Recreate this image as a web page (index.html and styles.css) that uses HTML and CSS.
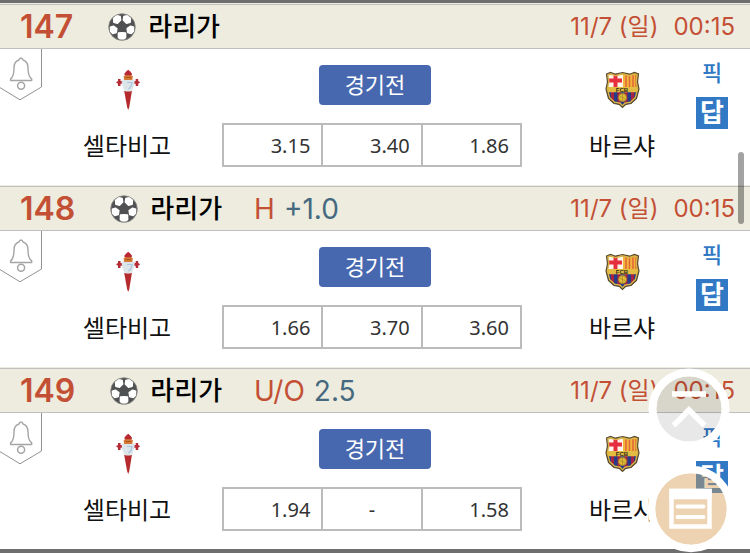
FILE: index.html
```html
<!DOCTYPE html>
<html lang="ko">
<head>
<meta charset="utf-8">
<meta name="viewport" content="width=device-width, initial-scale=1">
<title>라리가</title>
<link rel="stylesheet" href="styles.css">
</head>
<body>
<svg class="defs" aria-hidden="true">
  <symbol id="ball" viewBox="0 0 28 28">
    <circle cx="14" cy="14" r="13.3" fill="#505152"/>
    <g fill="#fff" stroke="#fff" stroke-width="1.400" stroke-linejoin="round">
      <path d="M5.500 5 8.800 2.600 12.200 3.500 12.700 7 9.500 10.300 5.800 9.300Z"/>
      <path d="M22.500 5 19.200 2.600 15.800 3.500 15.300 7 18.500 10.300 22.200 9.300Z"/>
      <path d="M2.300 14.200 5.400 13.200 8.900 15.600 8.300 19.500 4.800 20.600 2.600 18.500Z"/>
      <path d="M25.700 14.200 22.600 13.200 19.100 15.600 19.700 19.500 23.200 20.600 25.400 18.500Z"/>
      <path d="M10.400 20 14 19.700 17.600 20 17.700 24.500 16 26H12L10.300 24.500Z"/>
    </g>
    <circle cx="14" cy="14" r="13.3" fill="none" stroke="#8a8a86" stroke-width=".8"/>
  </symbol>
  <symbol id="tab" viewBox="0 0 42 52">
    <path d="M41.500 0V38L20 50.800-1 38" fill="none" stroke="#929292" stroke-width="1"/>
    <path d="M21 9C19.800 9 19.200 10 18.900 11 15.500 12 14 15 14 19 14 25 13 28 10.600 29.900V31.500H31.700V29.900C29 28 28 25 28 19 28 15 26.500 12 23.100 11 22.800 10 22.200 9 21 9Z" fill="none" stroke="#a5a5a5" stroke-width="1.400" stroke-linejoin="round"/>
    <circle cx="21.100" cy="36.800" r="3.500" fill="none" stroke="#a5a5a5" stroke-width="1.500"/>
  </symbol>
  <symbol id="celta" viewBox="0 0 48 48">
    <path d="M21.200 26H28.900L26.300 42 25.200 45 24.100 42Z" fill="#b52a2c"/>
    <path d="M13 17.300 15 15.900V14H17.500V16H20V18.800H17.500V21H15V18.800ZM37.200 17.300 35.200 15.900V14H32.700V16H30V18.800H32.700V21H35.200V18.800Z" fill="#b52a35"/>
    <path d="M18.500 14.500H32L31.200 19.500 29.500 24.500 27.500 26.500H22.700L20.800 24.500 19 19.500Z" fill="#dce5e7"/>
    <path d="M24 17.500H29L28 21.500 25.500 24" fill="none" stroke="#a9c5df" stroke-width="1.200"/>
    <path d="M20.500 11.500 23 9.500H27.300L30 11.500 29.200 15H21.200Z" fill="#d57a35"/>
    <path d="M22.500 12.500H28" stroke="#a95824" stroke-width="1"/>
    <path d="M21.300 8.700 23.200 6.400 25.200 4.700 27.200 6.400 29 8.700 28.600 10.200H21.800Z" fill="#b82934"/>
  </symbol>
  <symbol id="barca" viewBox="0 0 48 48">
    <clipPath id="shield"><path d="M8.500 9 12.500 7.500 17.500 9.200 24.500 7.500 31.500 9.200 36.500 7.500 40.500 9 39.500 17 41 24 38.500 33.500 33 38.500 27.500 39.500 24.500 42.500 21.500 39.500 16 38.500 10.500 33.500 8 24 9.500 17Z"/></clipPath>
    <g clip-path="url(#shield)">
      <path d="M7 6H25V23H7Z" fill="#fff5e8"/>
      <path d="M17.500 8V23M10 15.500H24" stroke="#e52e3e" stroke-width="4"/>
      <path d="M25 6H42V23H25Z" fill="#f3b63b"/>
      <path d="M28 9V23M31.500 9V23M35 9V23M38 9V23" stroke="#df653a" stroke-width="1.500"/>
      <path d="M7 27H42V43H7Z" fill="#263c87"/>
      <path d="M14.500 27V40M21 27V42M28 27V42M34.500 27V40" stroke="#a72346" stroke-width="3"/>
      <path d="M7 22H42V27.200H7Z" fill="#e2bd41"/>
      <circle cx="24.500" cy="32.500" r="4" fill="#e5bd35" stroke="#a6842c"/>
      <path d="M22 31.500 27 33.500M24.500 29V36" stroke="#a6842c" stroke-width=".7"/>
    </g>
    <path d="M9.800 10 12.500 8.900 17.500 10.500 24.500 8.900 31.500 10.500 36.500 8.900 39.200 10 38.400 17 39.700 24 37.500 32.700 32.500 37.300 27 38.300 24.500 41 22 38.300 16.500 37.300 11.500 32.700 9.300 24 10.600 17Z" fill="none" stroke="#d9b447" stroke-width="1.600"/>
    <path d="M8.500 9 12.500 7.500 17.500 9.200 24.500 7.500 31.500 9.200 36.500 7.500 40.500 9 39.500 17 41 24 38.500 33.500 33 38.500 27.500 39.500 24.500 42.500 21.500 39.500 16 38.500 10.500 33.500 8 24 9.500 17Z" fill="none" stroke="#594b2a" stroke-width="1.200"/>
  </symbol>
</svg>

<main class="matches">
  <article class="match">
    <header class="match-head">
      <span class="number">147</span>
      <svg class="ball" aria-hidden="true"><use href="#ball"/></svg>
      <h2 class="league">라리가</h2>
      <time class="when"><span>11/7 (일)</span><span>00:15</span></time>
    </header>
    <div class="match-body">
      <button class="alarm" type="button" aria-label="알림"><svg><use href="#tab"/></svg></button>
      <div class="team"><svg class="crest" aria-hidden="true"><use href="#celta"/></svg><span>셀타비고</span></div>
      <div class="center">
        <button class="status" type="button">경기전</button>
        <table class="odds"><tbody><tr><td>3.15</td><td>3.40</td><td>1.86</td></tr></tbody></table>
      </div>
      <div class="team"><svg class="crest" aria-hidden="true"><use href="#barca"/><text x="24" y="27" text-anchor="middle" class="crest-text">FCB</text></svg><span>바르샤</span></div>
      <div class="actions"><button class="pick" type="button">픽</button><button class="answer" type="button">답</button></div>
    </div>
  </article>

  <article class="match">
    <header class="match-head">
      <span class="number">148</span>
      <svg class="ball" aria-hidden="true"><use href="#ball"/></svg>
      <h2 class="league">라리가</h2>
      <span class="market">H</span><span class="line">+1.0</span>
      <time class="when"><span>11/7 (일)</span><span>00:15</span></time>
    </header>
    <div class="match-body">
      <button class="alarm" type="button" aria-label="알림"><svg><use href="#tab"/></svg></button>
      <div class="team"><svg class="crest" aria-hidden="true"><use href="#celta"/></svg><span>셀타비고</span></div>
      <div class="center">
        <button class="status" type="button">경기전</button>
        <table class="odds"><tbody><tr><td>1.66</td><td>3.70</td><td>3.60</td></tr></tbody></table>
      </div>
      <div class="team"><svg class="crest" aria-hidden="true"><use href="#barca"/><text x="24" y="27" text-anchor="middle" class="crest-text">FCB</text></svg><span>바르샤</span></div>
      <div class="actions"><button class="pick" type="button">픽</button><button class="answer" type="button">답</button></div>
    </div>
  </article>

  <article class="match">
    <header class="match-head">
      <span class="number">149</span>
      <svg class="ball" aria-hidden="true"><use href="#ball"/></svg>
      <h2 class="league">라리가</h2>
      <span class="market">U/O</span><span class="line">2.5</span>
      <time class="when"><span>11/7 (일)</span><span>00:15</span></time>
    </header>
    <div class="match-body">
      <button class="alarm" type="button" aria-label="알림"><svg><use href="#tab"/></svg></button>
      <div class="team"><svg class="crest" aria-hidden="true"><use href="#celta"/></svg><span>셀타비고</span></div>
      <div class="center">
        <button class="status" type="button">경기전</button>
        <table class="odds"><tbody><tr><td>1.94</td><td class="none">-</td><td>1.58</td></tr></tbody></table>
      </div>
      <div class="team"><svg class="crest" aria-hidden="true"><use href="#barca"/><text x="24" y="27" text-anchor="middle" class="crest-text">FCB</text></svg><span>바르샤</span></div>
      <div class="actions"><button class="pick" type="button">픽</button><button class="answer" type="button">답</button></div>
    </div>
  </article>
</main>

<div class="scroll-thumb"></div>
<button class="float to-top" type="button" aria-label="맨 위로">
  <svg viewBox="0 0 82 82">
    <circle cx="41" cy="41" r="33" fill="#000" fill-opacity=".09"/>
    <circle cx="41" cy="41" r="36.500" fill="none" stroke="#fff" stroke-width="8"/>
    <path d="M24 26H58M25.500 57.500 41 42 56.500 57.500" fill="none" stroke="#fff" stroke-width="5.500"/>
  </svg>
</button>
<button class="float to-list" type="button" aria-label="목록">
  <svg viewBox="0 0 88 88">
    <circle cx="44" cy="44" r="36" fill="#d7994d" fill-opacity=".43"/>
    <circle cx="44" cy="44" r="39.500" fill="none" stroke="#fff" stroke-width="7.500"/>
    <path d="M24.500 26H62.500V61.500H24.500Z" fill="none" stroke="#fff" stroke-width="4.500"/>
    <path d="M22.250 29H64.750" stroke="#fff" stroke-width="10.500"/>
    <path d="M30.500 41.500H56.500M30.500 52H56.500" stroke="#fff" stroke-width="3.800" stroke-linecap="round"/>
  </svg>
</button>
</body>
</html>
```
FILE: styles.css
```css
* { box-sizing: border-box; }

body {
  margin: 0;
  background: #fff;
  color: #111;
  font-family: Inter, "Noto Sans CJK KR", sans-serif;
}

button {
  margin: 0;
  padding: 0;
  border: 0;
  background: none;
  font: inherit;
  cursor: pointer;
}

.defs {
  position: absolute;
  width: 0;
  height: 0;
}

.crest-text {
  font: bold 6px "Liberation Sans", sans-serif;
  fill: #332c18;
}

.matches {
  border-top: 3px solid #6e6e6e;
  border-bottom: 4px solid #6e6e6e;
}

.match { border-top: 1px solid #eeecdf; }

.match-head {
  display: flex;
  align-items: center;
  height: 45px;
  padding: 0 15px 0 20px;
  border-top: 1px solid #bfbfbf;
  border-bottom: 1px solid #bfbfbf;
  background: #eeecdf;
  line-height: 40px;
  white-space: nowrap;
}

.number {
  color: #c35035;
  font-size: 32px;
  font-weight: 600;
}

.ball {
  width: 28px;
  height: 28px;
  margin: 0 12px 0 35px;
}

.league {
  margin: 0;
  color: #000;
  font-size: 26px;
  font-weight: 500;
}

.market,
.line { font-size: 28px; }

.market {
  margin-left: 32px;
  color: #c35035;
}

.line {
  margin-left: 9px;
  color: #45697e;
}

.when {
  display: flex;
  gap: 15px;
  margin-left: auto;
  color: #c35035;
  font-size: 24px;
}

.match-body {
  display: grid;
  grid-template-columns: 42px 170fr 336px 148fr 54px;
  min-height: 136px;
}

.alarm {
  align-self: start;
  height: 52px;
}

.alarm svg {
  display: block;
  width: 42px;
  height: 52px;
}

.team {
  display: flex;
  flex-direction: column;
  align-items: center;
  gap: 16px;
  padding-top: 16px;
  font-size: 24px;
  line-height: 36px;
  white-space: nowrap;
}

.crest {
  width: 48px;
  height: 48px;
}

.center {
  padding: 16px 26px 18px 10px;
}

.status {
  display: block;
  width: 112px;
  height: 40px;
  margin: 0 0 18px 97px;
  border-radius: 4px;
  background: #4768af;
  color: #fff;
  font-size: 22px;
  line-height: 40px;
}

.odds {
  width: 100%;
  height: 44px;
  table-layout: fixed;
  border-collapse: collapse;
  color: #333;
  font-family: "Noto Sans", sans-serif;
  font-size: 20px;
  line-height: 24px;
}

.odds td {
  padding: 1px 11px 0;
  border: 2px solid #bbb;
  text-align: right;
}

.odds .none { text-align: center; }

.actions {
  display: flex;
  flex-direction: column;
  gap: 8px;
  width: 32px;
  padding-top: 8px;
}

.pick {
  color: #3279c5;
  font-size: 22px;
  font-weight: 500;
  line-height: 32px;
}

.answer {
  height: 32px;
  background: #3279c5;
  color: #fff;
  font-size: 26px;
  font-weight: 700;
  line-height: 30px;
}

.scroll-thumb {
  position: fixed;
  top: 152px;
  right: 6px;
  width: 6px;
  height: 72px;
  border-radius: 3px;
  background: rgba(0, 0, 0, .36);
}

.float { position: fixed; }

.float svg {
  display: block;
  width: 100%;
}

.to-top {
  right: 20px;
  bottom: 103px;
  width: 82px;
  height: 82px;
}

.to-list {
  right: 15px;
  bottom: 0;
  width: 88px;
  height: 88px;
}
```
